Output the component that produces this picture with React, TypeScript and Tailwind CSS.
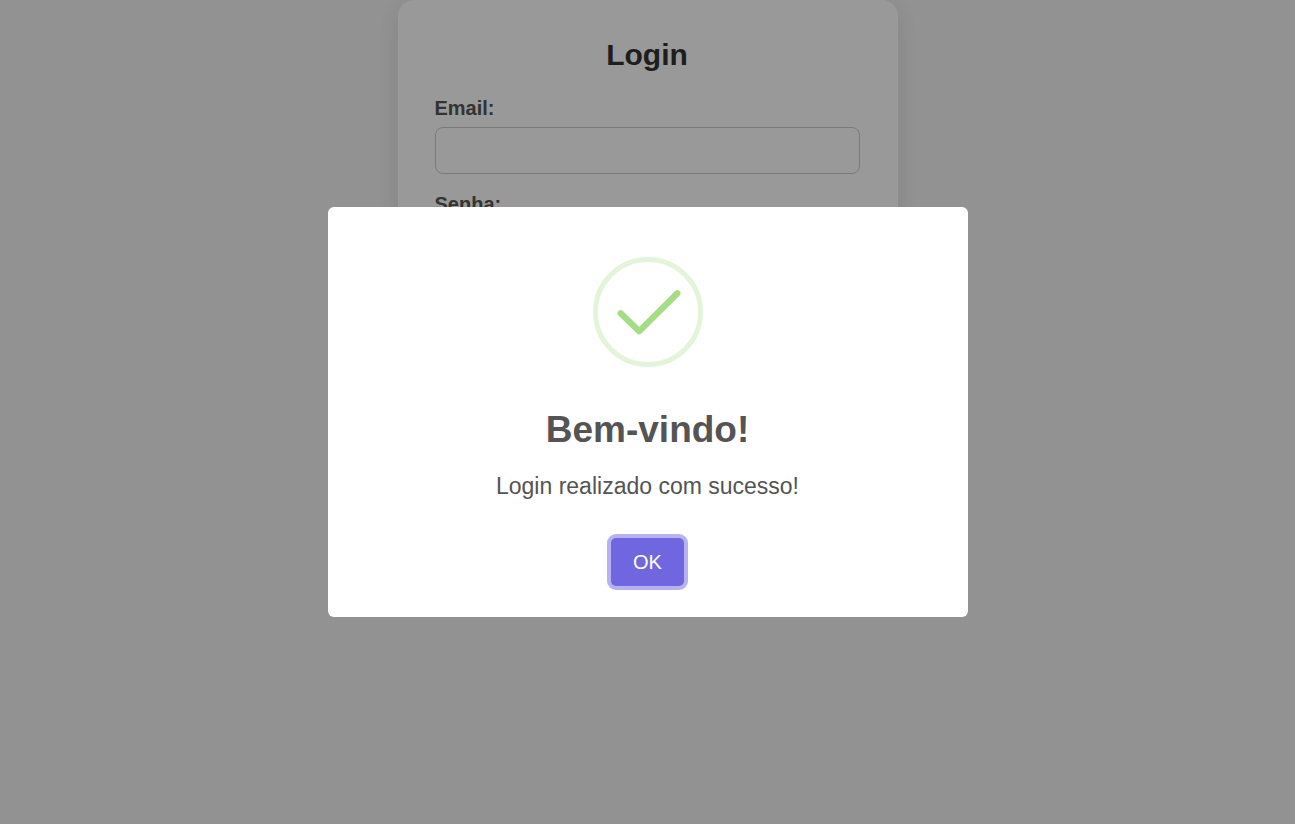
import React from "react";

function Field({ id, label, type }: { id: string; label: string; type: string }) {
  return (
    <div className="mb-[18px]">
      <label htmlFor={id} className="mb-[7px] block text-[20px] leading-6 font-bold text-[#555]">
        {label}
      </label>
      <input
        id={id}
        type={type}
        className="block h-[47px] w-full rounded-lg border border-[#ccc] bg-white px-3 text-[20px] outline-none"
      />
    </div>
  );
}

function SuccessIcon() {
  return (
    <svg viewBox="0 0 110 110" className="mx-auto mt-[50px] size-[110px]" fill="none" aria-hidden="true">
      <circle cx="55" cy="55" r="52.5" stroke="#e4f4db" strokeWidth="5" />
      <path
        d="M27.7 56.2L46.2 74.3L84.4 36.2"
        stroke="#a5dc86"
        strokeWidth="6.25"
        strokeLinecap="round"
        strokeLinejoin="round"
      />
    </svg>
  );
}

export default function App() {
  return (
    <div className="min-h-screen bg-[#f4f4f4] font-['Liberation_Sans',Arial,sans-serif]">
      <main className="mx-auto w-full max-w-[500px] rounded-2xl bg-white pt-[37px] pr-[38px] pb-9 pl-[37px] shadow-[0_5px_25px_rgba(0,0,0,0.1)]">
        <h1 className="mb-[23px] text-center text-[30px] leading-9 font-bold text-[#333]">Login</h1>
        <form>
          <Field id="email" label="Email:" type="email" />
          <Field id="senha" label="Senha:" type="password" />
          <button type="submit" className="mt-6 h-12 w-full rounded-lg bg-[#7066e0] text-[20px] text-white">
            Entrar
          </button>
        </form>
      </main>

      <div className="fixed inset-0 flex items-center justify-center bg-black/40 p-3">
        <section
          role="dialog"
          aria-modal="true"
          aria-labelledby="dialog-title"
          aria-describedby="dialog-text"
          className="w-full max-w-[640px] rounded-md bg-white pb-[31px] text-center text-[#545454]"
        >
          <SuccessIcon />
          <h2 id="dialog-title" className="mt-10 text-[37px] leading-[46px] font-semibold">
            Bem-vindo!
          </h2>
          <p id="dialog-text" className="mt-[19px] text-[23px] leading-7">
            Login realizado com sucesso!
          </p>
          <button
            type="button"
            className="mt-[38px] h-12 rounded-[5px] bg-[#7066e0] px-[22px] text-[20px] text-white shadow-[0_0_0_4px_rgba(112,102,224,0.5)] outline-none"
          >
            OK
          </button>
        </section>
      </div>
    </div>
  );
}
